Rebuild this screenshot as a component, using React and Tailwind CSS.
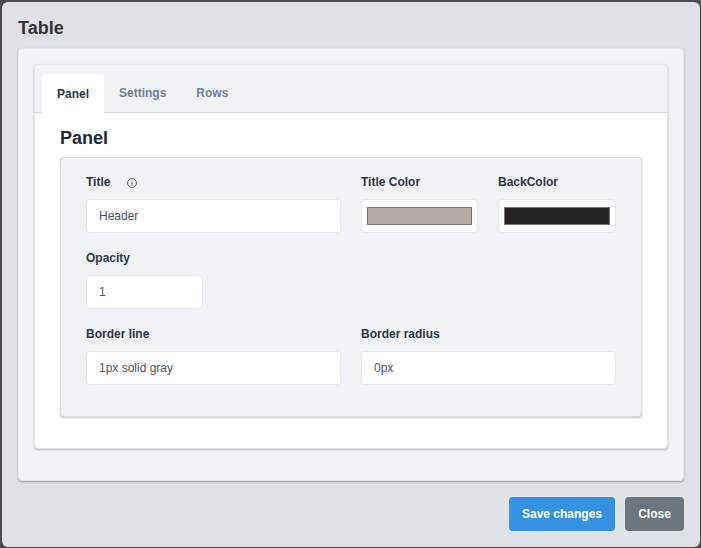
import React, { useState } from "react";

const TABS = ["Panel", "Settings", "Rows"];

function Field({ label, className = "", children }) {
  return (
    <div className={className}>
      <label className="mb-[8px] flex h-[17px] items-center text-[12px] font-bold leading-[17px] text-[#2d3748]">
        {label}
      </label>
      {children}
    </div>
  );
}

function TextInput({ value }) {
  return (
    <input
      readOnly
      value={value}
      className="block h-[34px] w-full rounded-[4px] border border-[#e2e8f0] bg-white px-[12px] text-[12px] text-[#4a5568] outline-none"
    />
  );
}

function ColorInput({ color }) {
  return (
    <div className="flex h-[34px] w-full items-center rounded-[4px] border border-[#e2e8f0] bg-white px-[5px]">
      <div className={`h-[18px] w-full border border-[#767676] ${color}`} />
    </div>
  );
}

function InfoIcon() {
  return (
    <svg width="10" height="10" viewBox="0 0 10 10" className="ml-[17px]" fill="none">
      <circle cx="5" cy="5" r="4.4" stroke="#2d3748" strokeWidth="0.8" />
      <path d="M5 4.4V7.3" stroke="#2d3748" strokeWidth="0.9" />
      <path d="M5 2.5V3.4" stroke="#2d3748" strokeWidth="0.9" />
    </svg>
  );
}

export default function App() {
  const [tab, setTab] = useState("Panel");

  return (
    <div className="h-[548px] w-[701px] bg-[#4a4a4a] pt-[2px] pr-[1px] pb-[1px] pl-[2px] font-['Liberation_Sans',sans-serif]">
      <div className="flex h-[545px] flex-col rounded-[6px] bg-[#dee1e6] px-[16px]">
        <h1 className="mt-[16px] h-[30px] text-[18px] font-bold leading-[20px] text-[#333333]">Table</h1>

        <div className="h-[433px] rounded-[4px] border border-[#e4e6e9] bg-[#f1f2f4] p-[15px] shadow-[0_1px_2px_rgba(0,0,0,0.3)]">
          <div className="h-[385px] rounded-[4px] border border-[#e2e4e7] bg-white shadow-[0_1px_2px_rgba(0,0,0,0.25)]">
            <div className="flex h-[48px] items-end rounded-t-[4px] border-b border-[#d8dbdf] bg-[#f1f2f4] pl-[7px]">
              {TABS.map((t) => (
                <button
                  key={t}
                  onClick={() => setTab(t)}
                  className={`rounded-t-[4px] px-[15px] text-[12px] font-bold ${
                    tab === t ? "-mb-px h-[39px] bg-white text-[#2d3748]" : "h-[38px] text-[#718096]"
                  }`}
                >
                  {t}
                </button>
              ))}
            </div>

            <div className="px-[25px]">
              <h2 className="mt-[15px] mb-[8px] text-[18px] font-bold leading-[21px] text-[#1a2a3a]">Panel</h2>

              <div className="h-[260px] rounded-[4px] border border-[#d8dbdf] bg-[#f1f2f4] px-[25px] pt-[16px] shadow-[0_1px_2px_rgba(0,0,0,0.25)]">
                <div className="grid grid-cols-[117px_118px_117px_118px] gap-x-[20px] gap-y-[17px]">
                  <Field
                    className="col-span-2"
                    label={
                      <>
                        Title
                        <InfoIcon />
                      </>
                    }
                  >
                    <TextInput value="Header" />
                  </Field>
                  <Field label="Title Color">
                    <ColorInput color="bg-[#b5aba9]" />
                  </Field>
                  <Field label="BackColor">
                    <ColorInput color="bg-[#222222]" />
                  </Field>

                  <Field label="Opacity">
                    <TextInput value="1" />
                  </Field>
                  <div className="col-span-3" />

                  <Field className="col-span-2" label="Border line">
                    <TextInput value="1px solid gray" />
                  </Field>
                  <Field className="col-span-2" label="Border radius">
                    <TextInput value="0px" />
                  </Field>
                </div>
              </div>
            </div>
          </div>
        </div>

        <div className="mt-[16px] flex justify-end gap-[10px]">
          <button className="h-[34px] w-[106px] rounded-[4px] bg-[#3490e3] text-[12px] font-bold text-white">
            Save changes
          </button>
          <button className="h-[34px] w-[59px] rounded-[4px] bg-[#6c757d] text-[12px] font-bold text-white">
            Close
          </button>
        </div>
      </div>
    </div>
  );
}
